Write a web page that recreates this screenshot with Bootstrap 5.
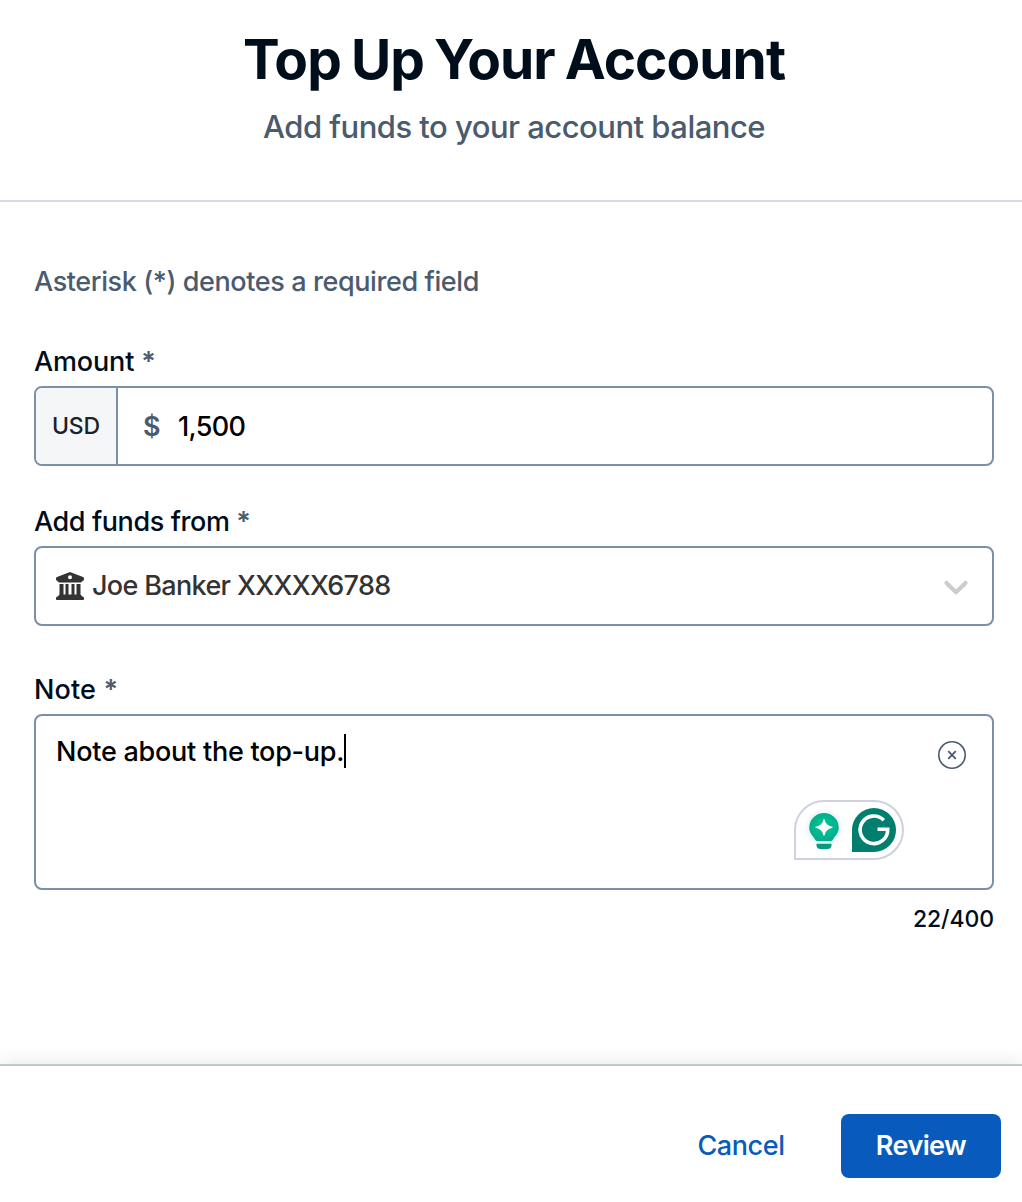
<!DOCTYPE html>
<html lang="en">
<head>
<meta charset="utf-8">
<meta name="viewport" content="width=device-width, initial-scale=1">
<title>Top Up Your Account</title>
<link href="https://cdn.jsdelivr.net/npm/bootstrap@5.3.0/dist/css/bootstrap.min.css" rel="stylesheet">
<style>
body{font-family:Inter,"Liberation Sans",sans-serif;font-size:27px;line-height:40px;font-weight:500;letter-spacing:-.4px;color:#000d1a;background:#fff;overflow:hidden}
.page{height:1202px}
.top-head{height:202px;padding-top:27px;padding-left:6px;border-bottom:2px solid #d5dbe5}
.top-title{font-size:55px;line-height:64px;font-weight:700;letter-spacing:-.95px;word-spacing:-2px;margin-bottom:16px}
.sub-title{font-size:31px;font-weight:450;letter-spacing:-.52px;color:#4b5b6e}
.form-area{padding:60px 28px 0 34px}
.muted-ink{color:#4b5b6e}
.hint-line{margin-bottom:40px}
.field-name{display:block;margin-bottom:4px}
.star{font-weight:600}
.name-amount{letter-spacing:-.15px}
.name-note{letter-spacing:.15px}
.box{border:2px solid #7b8fa8;border-radius:8px;height:80px}
.input-group.box{margin-bottom:36px}
.unit{width:82px;background:#f5f6f8;border:0;border-right:2px solid #7b8fa8;border-radius:6px 0 0 6px;color:#1a222c;font-size:23px;font-weight:450;letter-spacing:-.2px;padding:0;justify-content:center}
.value-row{padding-top:2px}
.dollar{width:35px;margin-left:26px;font-weight:600}
.amount-value{color:#000;letter-spacing:-.65px}
.bank-select{margin-bottom:44px;padding:0 23px 0 20px;color:#333;font-weight:450;letter-spacing:-.66px}
.note-box{height:176px;padding:16px 20px;color:#000;letter-spacing:-.25px}
.caret{display:inline-block;width:2px;height:34px;background:#000;vertical-align:-7px}
.clear-icon{right:26px;top:25px}
.helper-pill{right:88px;top:84px}
.count{font-size:23px;line-height:32px;letter-spacing:-.1px;margin-top:13px}
.foot{height:138px;border-top:2px solid #bfcaca;padding:48px 21px 0 0;box-shadow:0 -2px 18px rgba(0,0,0,.09)}
.foot .btn{height:64px;font-size:27px;line-height:40px;font-weight:500;letter-spacing:-.4px;border:0;border-radius:8px;padding:0;white-space:nowrap}
.foot .btn-cancel{color:#085bbd;width:88px;margin-right:56px}
.foot .btn-review{background:#085bbd;color:#fff;width:160px;font-weight:600;letter-spacing:-.6px}
</style>
<script src="https://cdn.jsdelivr.net/npm/bootstrap@5.3.0/dist/js/bootstrap.bundle.min.js" defer></script>
</head>
<body>
<main class="page d-flex flex-column">
  <header class="top-head text-center">
    <h1 class="top-title">Top Up Your Account</h1>
    <p class="sub-title mb-0">Add funds to your account balance</p>
  </header>
  <form class="form-area flex-grow-1">
    <p class="hint-line muted-ink">Asterisk (*) denotes a required field</p>
    <label class="field-name name-amount">Amount <span class="muted-ink star">*</span></label>
    <div class="input-group box">
      <span class="input-group-text unit">USD</span>
      <div class="value-row d-flex align-items-center"><span class="muted-ink dollar">$</span><span class="amount-value">1,500</span></div>
    </div>
    <label class="field-name">Add funds from <span class="muted-ink star">*</span></label>
    <div class="box bank-select d-flex align-items-center">
      <svg width="28" height="28" viewBox="0 0 28 28" fill="#333"><path fill-rule="evenodd" d="M14 0 27 5Q28 5.400 28 6.300V7.500Q28 8.500 27 8.700L25 10.500H3L1 8.700Q0 8.500 0 7.500V6.300Q0 5.400 1 5ZM14 3.200a2 2 0 1 0 0 4 2 2 0 0 0 0-4Z"/><path d="M3.500 12h4v10.500h2V12h3v10.500h3V12h3v10.500h2V12h4v10.500l1.800 2H1.700l1.800-2ZM1.500 24.500h25Q28 24.500 28 26v1.200q0 .8-.8.8H.8Q0 28 0 27.200V26q0-1.500 1.500-1.500Z"/></svg>
      <span class="ms-2">Joe Banker XXXXX6788</span>
      <svg class="ms-auto mt-1" width="26" height="18" viewBox="0 0 26 18" fill="none" stroke="#ccc" stroke-width="4.200" stroke-linecap="round" stroke-linejoin="round"><path d="M3.500 4 13 13.200 22.500 4"/></svg>
    </div>
    <label class="field-name name-note">Note <span class="muted-ink star">*</span></label>
    <div class="box note-box position-relative">
      <span>Note about the top-up.</span><span class="caret"></span>
      <svg class="clear-icon position-absolute" width="28" height="28" viewBox="0 0 28 28" fill="none" stroke="#4b5b6e"><circle cx="14" cy="14" r="13.200" stroke-width="1.600"/><path d="m10.200 10.200 7.600 7.600m0-7.600-7.600 7.600" stroke-width="1.800"/></svg>
      <svg class="helper-pill position-absolute" width="110" height="60" viewBox="0 0 110 60"><defs><radialGradient id="glow"><stop offset="0" stop-color="#00c99a"/><stop offset="1" stop-color="#04ae8b"/></radialGradient><radialGradient id="halo"><stop offset=".6" stop-color="#00b894" stop-opacity=".16"/><stop offset="1" stop-color="#00b894" stop-opacity="0"/></radialGradient></defs>
        <path d="M1 59V30A29 29 0 0 1 30 1H80a29 29 0 0 1 0 58Z" fill="#fff" stroke="#cfd1df" stroke-width="2"/>
        <circle cx="30" cy="28" r="20" fill="url(#halo)"/>
        <path d="M30 13a14.700 14.700 0 0 1 14.700 14.700c0 4.800-2.700 7.300-4.700 10-1 1.500-1.500 3.300-3 3.300H23c-1.500 0-2-1.800-3-3.300-2-2.700-4.700-5.200-4.700-10A14.700 14.700 0 0 1 30 13Z" fill="url(#glow)"/>
        <path d="M22.500 43.800h15v1.200q0 4-4 4h-7q-4 0-4-4Z" fill="#049a7e"/>
        <path d="M30 19.500Q31.500 26 38.300 27.300 31.500 28.800 30 35.300 28.500 28.800 21.700 27.300 28.500 26 30 19.500Z" fill="#fff" stroke="#fff" stroke-linejoin="round"/>
        <path d="M58 52V30a22 22 0 1 1 22 22Z" fill="#007f6e"/>
        <path d="M89.800 20.200A13.800 13.800 0 1 0 93.700 29.200H83.500" fill="none" stroke="#fff" stroke-width="3.600"/>
      </svg>
    </div>
    <div class="count text-end">22/400</div>
  </form>
  <footer class="foot d-flex justify-content-end">
    <button type="button" class="btn btn-cancel">Cancel</button>
    <button type="button" class="btn btn-review">Review</button>
  </footer>
</main>
</body>
</html>
